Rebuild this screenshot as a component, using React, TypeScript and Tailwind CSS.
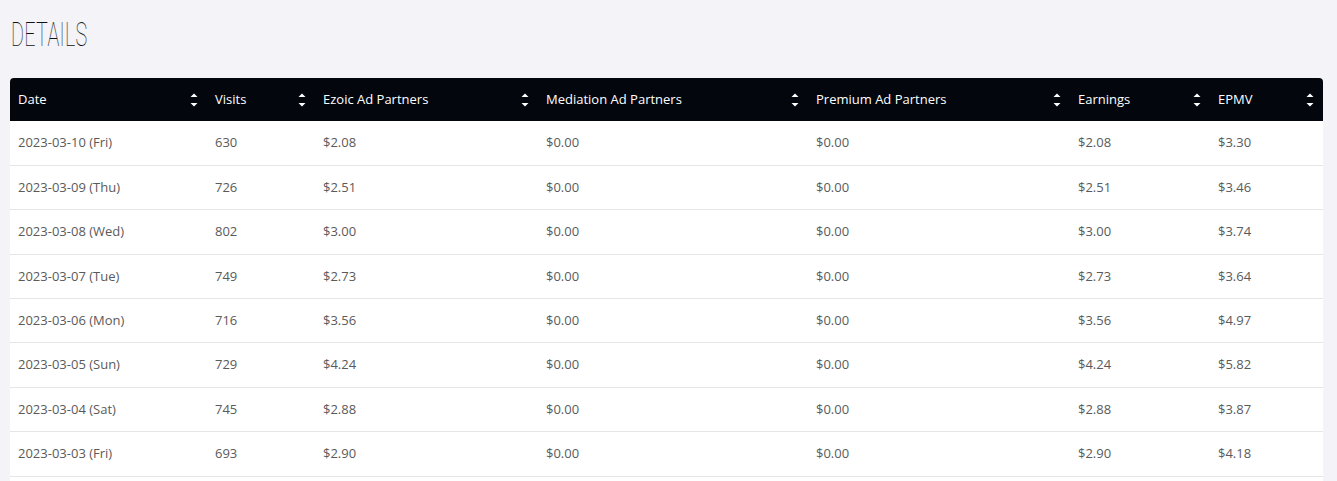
import React from "react";

const columns = [
  { label: "Date", width: "w-[197px]" },
  { label: "Visits", width: "w-[108px]" },
  { label: "Ezoic Ad Partners", width: "w-[223px]" },
  { label: "Mediation Ad Partners", width: "w-[270px]" },
  { label: "Premium Ad Partners", width: "w-[262px]" },
  { label: "Earnings", width: "w-[140px]" },
  { label: "EPMV", width: "w-[113px]" },
];

const rows = [
  ["2023-03-10 (Fri)", "630", "$2.08", "$0.00", "$0.00", "$2.08", "$3.30"],
  ["2023-03-09 (Thu)", "726", "$2.51", "$0.00", "$0.00", "$2.51", "$3.46"],
  ["2023-03-08 (Wed)", "802", "$3.00", "$0.00", "$0.00", "$3.00", "$3.74"],
  ["2023-03-07 (Tue)", "749", "$2.73", "$0.00", "$0.00", "$2.73", "$3.64"],
  ["2023-03-06 (Mon)", "716", "$3.56", "$0.00", "$0.00", "$3.56", "$4.97"],
  ["2023-03-05 (Sun)", "729", "$4.24", "$0.00", "$0.00", "$4.24", "$5.82"],
  ["2023-03-04 (Sat)", "745", "$2.88", "$0.00", "$0.00", "$2.88", "$3.87"],
  ["2023-03-03 (Fri)", "693", "$2.90", "$0.00", "$0.00", "$2.90", "$4.18"],
];

const SortIcon = () => (
  <svg width="8" height="16" viewBox="0 0 8 16" className="shrink-0">
    <path d="M4 1.5 L7.5 5 L0.5 5 Z" fill="#fff" />
    <path d="M0.5 11 L7.5 11 L4 14.5 Z" fill="#fff" />
  </svg>
);

export default function App() {
  return (
    <div className="min-h-screen bg-[#f3f3f8] px-[10px] pt-[18px] font-['Open_Sans',sans-serif]">
      <h1 className="mb-[26px] ml-[1px] h-[34px] origin-left scale-x-[0.6] font-['Roboto',sans-serif] text-[33px] font-thin leading-[34px] tracking-[0.5px] text-[#111]">
        DETAILS
      </h1>
      <div className="w-[1313px] overflow-hidden rounded-t-[4px] bg-white">
        <table className="w-full table-fixed border-collapse text-[13px]">
          <thead>
            <tr className="h-[43px] bg-[#03060d]">
              {columns.map((c) => (
                <th key={c.label} className={`${c.width} px-[8px] text-left font-normal text-white`}>
                  <div className="flex items-center justify-between pr-[1px]">
                    <span>{c.label}</span>
                    <SortIcon />
                  </div>
                </th>
              ))}
            </tr>
          </thead>
          <tbody>
            {rows.map((r) => (
              <tr key={r[0]} className="h-[44.4px] border-b border-[#e6e6e9]">
                {r.map((v, i) => (
                  <td key={i} className="px-[8px] text-[#5a5a5a]">
                    {v}
                  </td>
                ))}
              </tr>
            ))}
            <tr className="h-[44px]">
              <td colSpan={7} />
            </tr>
          </tbody>
        </table>
      </div>
    </div>
  );
}
